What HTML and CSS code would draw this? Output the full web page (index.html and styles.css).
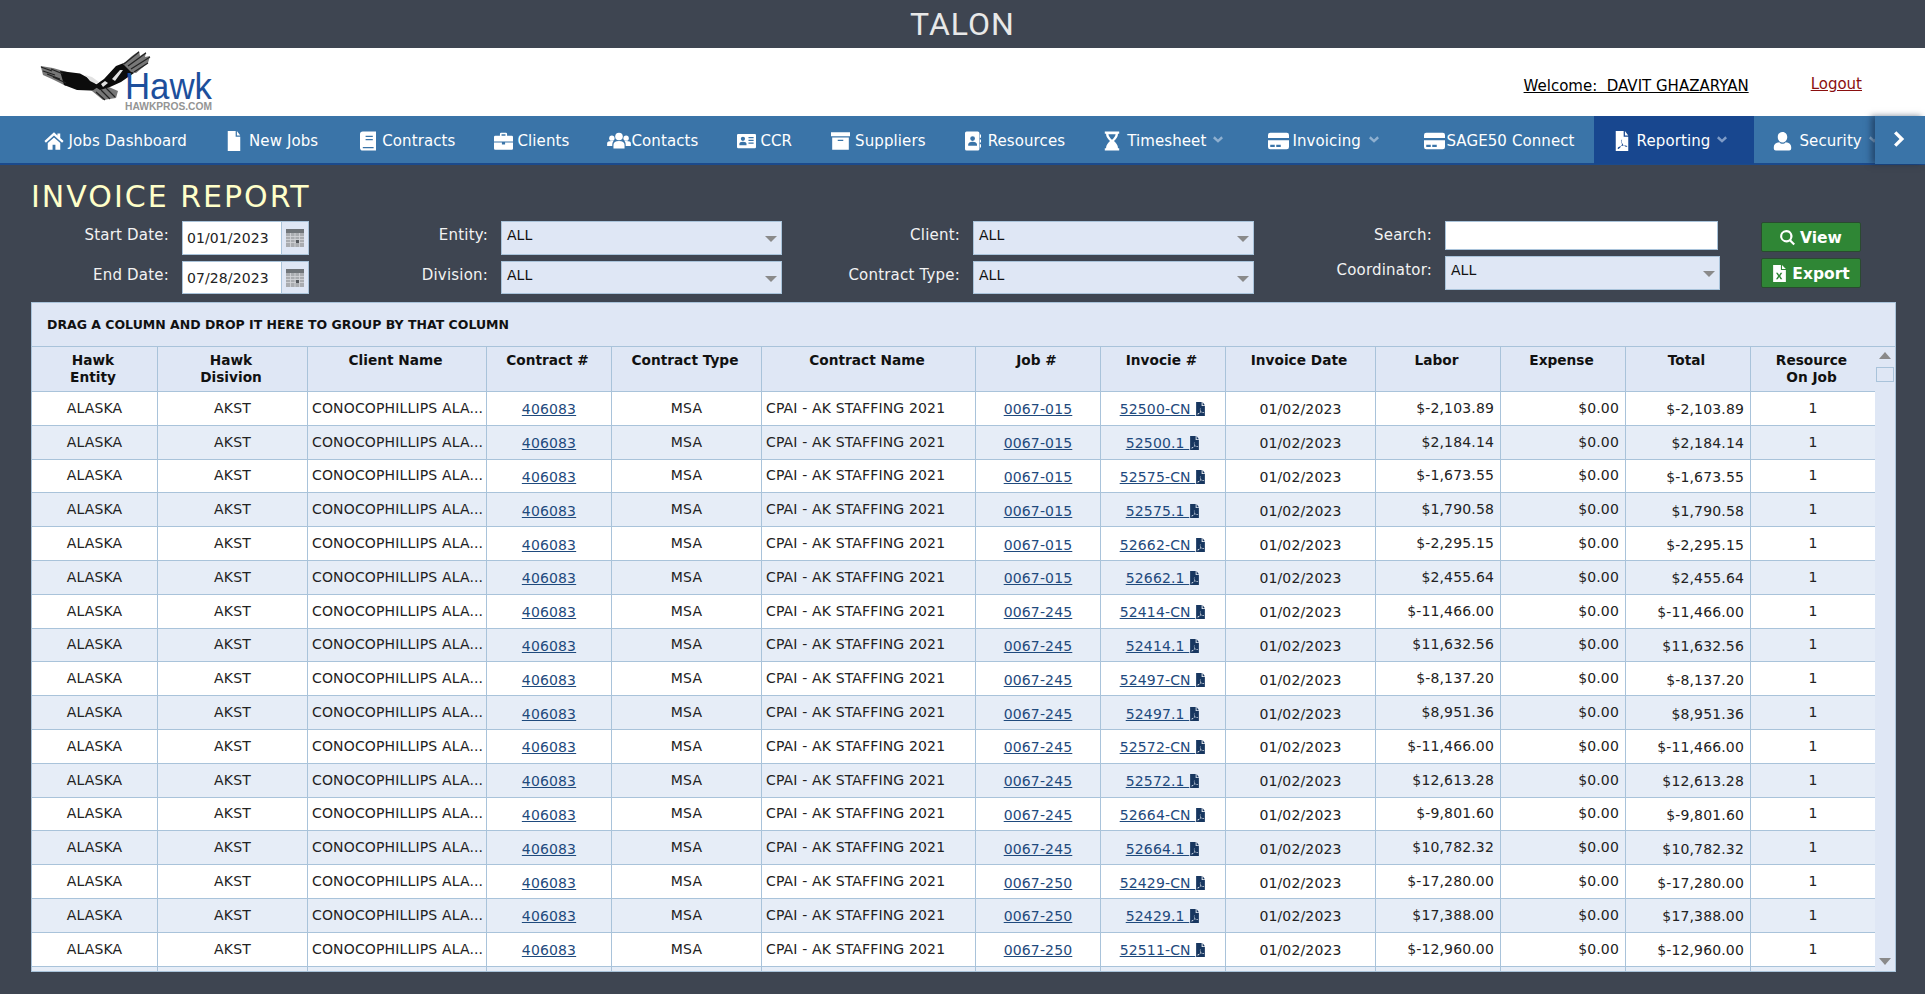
FILE: index.html
```html
<!DOCTYPE html>
<html lang="en">
<head>
<meta charset="utf-8">
<title>Talon - Invoice Report</title>
<link rel="stylesheet" href="styles.css">
</head>
<body>
<svg class="sprite" xmlns="http://www.w3.org/2000/svg">
<symbol id="i-home" viewBox="0 0 24 21"><path fill-rule="evenodd" d="M12 0 0.500 10.500l1.800 2L12 3.900l9.700 8.600 1.800-2-4-3.600V1.500h-3.400v2.400zM4.500 12.900V21h5.800v-6h3.400v6h5.800v-8.100L12 6.400z"/></symbol>
<symbol id="i-file" viewBox="0 0 17 24"><path d="M1 0h9.500v7H16v17H1zM12 0l4 5.500h-4z"/></symbol>
<symbol id="i-book" viewBox="0 0 20 24"><path fill-rule="evenodd" d="M0 3.500A3.500 3.500 0 0 1 3.500 0H20v24H3.500A3.500 3.500 0 0 1 0 20.500zM7 5.500v1.600h9V5.500zM7 9.500v1.600h9V9.500zM3.500 19.500V21H17v-1.500z"/></symbol>
<symbol id="i-brief" viewBox="0 0 24 23"><path fill-rule="evenodd" d="M7.500 5V2.500A1.500 1.500 0 0 1 9 1h6a1.500 1.500 0 0 1 1.500 1.500V5H22.500A1.500 1.500 0 0 1 24 6.500V12H0V6.500A1.500 1.500 0 0 1 1.500 5zM9.500 3v2h5V3zM0 13.500h10V16h4v-2.500h10V21a1.500 1.500 0 0 1-1.500 1.500h-21A1.500 1.500 0 0 1 0 21z"/></symbol>
<symbol id="i-users" viewBox="0 0 30 24"><circle cx="15" cy="7" r="4.800"/><circle cx="6" cy="9" r="3.400"/><circle cx="24" cy="9" r="3.400"/><path d="M8 22v-4.500C8 14.500 10.500 12.500 15 12.500s7 2 7 5V22zM0 19v-3.500C0 13.500 2 12.500 6 12.500c1 0 1.500.1 2 .3C6.800 14 6.500 15.500 6.500 19zM30 19v-3.500c0-2-2-3-6-3-1 0-1.500.1-2 .3 1.200 1.200 1.500 2.700 1.500 6.200z"/></symbol>
<symbol id="i-card" viewBox="0 0 24 20"><path fill-rule="evenodd" d="M1.500 1h21A1.500 1.500 0 0 1 24 2.500v15a1.500 1.500 0 0 1-1.500 1.500h-21A1.500 1.500 0 0 1 0 17.500v-15A1.500 1.500 0 0 1 1.500 1zM7.500 4.500a2.700 2.700 0 1 0 0 5.400 2.700 2.700 0 0 0 0-5.400zM3 15.500h9v-2c0-1.700-1.500-2.700-4.500-2.700S3 11.800 3 13.500zM14.500 5v1.500H21V5zM14.500 8.500V10H21V8.500zM14.500 12v1.500H21V12z"/></symbol>
<symbol id="i-archive" viewBox="0 0 24 24"><path fill-rule="evenodd" d="M0 1h24v5H0zM1.500 7.500h21V23h-21zM8.500 10.500V12h7v-1.500z"/></symbol>
<symbol id="i-abook" viewBox="0 0 20 24"><path fill-rule="evenodd" d="M2 0h14a2 2 0 0 1 2 2v20a2 2 0 0 1-2 2H2a2 2 0 0 1-2-2V2a2 2 0 0 1 2-2zM9.500 6a3 3 0 1 0 0 6 3 3 0 0 0 0-6zM4 18h11v-1.500c0-2-2-3.500-5.500-3.500S4 14.500 4 16.500z"/><path d="M18.500 4H20v4h-1.500zM18.500 10H20v4h-1.500zM18.500 16H20v4h-1.500z"/></symbol>
<symbol id="i-hour" viewBox="0 0 20 24"><path fill-rule="evenodd" d="M1 0h18v3h-1.500c0 4-2.500 6.500-5 9 2.500 2.500 5 5 5 9H19v3H1v-3h1.500c0-4 2.500-6.500 5-9-2.500-2.500-5-5-5-9H1zM5.500 3.500c.5 3 2.500 5 4.500 7 2-2 4-4 4.500-7z"/></symbol>
<symbol id="i-credit" viewBox="0 0 28 24"><path fill-rule="evenodd" d="M3 1h22a3 3 0 0 1 3 3v4H0V4a3 3 0 0 1 3-3zM0 11h28v9a3 3 0 0 1-3 3H3a3 3 0 0 1-3-3zM3 17v3h6v-3zM11 17v3h6v-3z"/></symbol>
<symbol id="i-pdf" viewBox="0 0 17 24"><path fill-rule="evenodd" d="M1 0h9.500v7H16v17H1zM8 10.500c-1 .5-.5 3 .6 5.500-1 2.500-2.800 5-4.300 5.500-.8.300-1.300-.6-.8-1.300 1-1.200 3.200-2 7-2.700 2-.3 4 0 4.300.8.200.8-1 1-2.300.4-1.800-.9-3.300-2.700-4.200-4.800-.5-1.800-.3-3.200.7-3.400z"/><path d="M12 0l4 5.500h-4z"/></symbol>
<symbol id="i-user" viewBox="0 0 24 24"><path d="M12 0.500c3.800 0 6 3 6 6.500s-2.200 7-6 7-6-3.500-6-7 2.200-6.500 6-6.500zM8 13.500c1 1.500 2.500 2 4 2s3-.5 4-2c4.500.5 7 2.500 7 6v2A2.500 2.500 0 0 1 20.500 24h-17A2.500 2.500 0 0 1 1 21.500v-2c0-3.500 2.500-5.500 7-6z"/></symbol>
<symbol id="i-down" viewBox="0 0 12 8"><path d="M2 0 6 4 10 0 12 2.500 6 8 0 2.500z"/></symbol>
<symbol id="i-right" viewBox="0 0 14 20"><path d="M3 0 13 10 3 20 0 17l7-7-7-7z"/></symbol>
<symbol id="i-search" viewBox="0 0 24 24"><path fill-rule="evenodd" d="M10 0a10 10 0 0 1 8 16l6 6-2.500 2.500-6-6A10 10 0 1 1 10 0zM10 3.500a6.500 6.500 0 1 0 0 13 6.500 6.500 0 0 0 0-13z"/></symbol>
<symbol id="i-xls" viewBox="0 0 20 24"><path fill-rule="evenodd" d="M1 0h11v7h7v17H1zM5 11l3 4.500L5 20h2.500l2-3 2 3H14l-3-4.500L14 11h-2.500l-2 3-2-3z"/><path d="M13.500 0 19 5.500h-5.500z"/></symbol>
<symbol id="i-cal" viewBox="0 0 18 18"><path d="M0 0h18v4H0z" fill="#6f7479"/><path d="M0 4h18v14H0z" fill="#a9acb0"/><path d="M0 7.500h18M0 10.500h18M0 13.500h18M4.500 4v14M9 4v14M13.500 4v14" stroke="#d5d7da" stroke-width=".8"/><path d="M10 11h3v3h-3z" fill="#55595e"/></symbol>
</svg>

<header class="topbar"><span class="brand">TALON</span></header>

<div class="masthead">
  <svg class="logo" viewBox="0 0 190 68" xmlns="http://www.w3.org/2000/svg" aria-label="Hawk">
    <g class="eagle">
      <path class="grey" d="M4.700 18 17 20 31 24 30 38 17 31.500 7 27z"/>
      <path d="M24 23 44 25.500 56 32 62 38 60 43 54 42.500 41 42 28 37z"/>
      <path class="grey" d="M56 43 66 36 82 43 80 50 67 52z"/>
      <path d="M68 31 80 18 93 13 98 25 85 34 74 39 64 42 58 38z"/>
      <path class="grey" d="M87 16 96 8 103 3 104 8 110 4 109 9 114 8 112 15 100 25 95 24z"/>
      <path class="feather" d="M5 19 16 23M7 23 19 27M11 26 24 31M17 29 30 35M15 21 27 26M88 16 103 4M92 18 110 5M95 21 114 9M98 24 112 15M60 44 69 52M65 42 74 51M70 40 79 49"/>
      <path class="white" d="M49 27 56 29 63 34 60 36 54 33zM65 36 69 33 72 35 67 39zM76 31 84 22 87 22 79 33z"/>
    </g>
    <text class="logo-word" x="89" y="51" textLength="87" lengthAdjust="spacingAndGlyphs">Hawk</text>
    <text class="logo-site" x="89" y="61.500" textLength="87" lengthAdjust="spacingAndGlyphs">HAWKPROS.COM</text>
  </svg>
  <div class="account">
    <a class="welcome" href="#">Welcome:&nbsp; DAVIT GHAZARYAN</a>
    <a class="logout" href="#">Logout</a>
  </div>
</div>

<div class="navwrap">
<nav class="nav">
  <a href="#" class="item g5"><svg class="ic i-home"><use href="#i-home"/></svg><span>Jobs Dashboard</span></a>
  <a href="#" class="item after3"><svg class="ic i-file"><use href="#i-file"/></svg><span>New Jobs</span></a>
  <a href="#" class="item g6"><svg class="ic i-file"><use href="#i-book"/></svg><span>Contracts</span></a>
  <a href="#" class="item g4"><svg class="ic i-wide"><use href="#i-brief"/></svg><span>Clients</span></a>
  <a href="#" class="item g0"><svg class="ic i-users"><use href="#i-users"/></svg><span>Contacts</span></a>
  <a href="#" class="item g4x"><svg class="ic i-wide"><use href="#i-card"/></svg><span>CCR</span></a>
  <a href="#" class="item g5"><svg class="ic i-wide"><use href="#i-archive"/></svg><span>Suppliers</span></a>
  <a href="#" class="item"><svg class="ic i-file"><use href="#i-abook"/></svg><span>Resources</span></a>
  <a href="#" class="item caret"><svg class="ic i-file"><use href="#i-hour"/></svg><span>Timesheet</span><svg class="chev"><use href="#i-down"/></svg></a>
  <a href="#" class="item caret g3x"><svg class="ic i-credit"><use href="#i-credit"/></svg><span>Invoicing</span><svg class="chev"><use href="#i-down"/></svg></a>
  <a href="#" class="item g1x"><svg class="ic i-credit"><use href="#i-credit"/></svg><span>SAGE50 Connect</span></a>
  <a href="#" class="item caret active"><svg class="ic i-file"><use href="#i-pdf"/></svg><span>Reporting</span><svg class="chev"><use href="#i-down"/></svg></a>
  <a href="#" class="item caret"><svg class="ic i-wide"><use href="#i-user"/></svg><span>Security</span><svg class="chev"><use href="#i-down"/></svg></a>
</nav>
<button class="navnext" aria-label="Next"><svg class="next"><use href="#i-right"/></svg></button>
</div>

<main class="content">
  <h1 class="title">INVOICE REPORT</h1>
  <section class="filters">
    <div class="fgroup g1">
      <label>Start Date:</label><div class="date tall"><span>01/01/2023</span><i><svg><use href="#i-cal"/></svg></i></div>
      <label>End Date:</label><div class="date"><span>07/28/2023</span><i><svg><use href="#i-cal"/></svg></i></div>
    </div>
    <div class="fgroup g2">
      <label>Entity:</label><div class="select tall"><span>ALL</span><b></b></div>
      <label>Division:</label><div class="select"><span>ALL</span><b></b></div>
    </div>
    <div class="fgroup g3">
      <label>Client:</label><div class="select tall"><span>ALL</span><b></b></div>
      <label>Contract Type:</label><div class="select"><span>ALL</span><b></b></div>
    </div>
    <div class="fgroup g4c">
      <label>Search:</label><div class="search"></div>
      <label>Coordinator:</label><div class="select tall"><span>ALL</span><b></b></div>
    </div>
    <div class="actions">
      <button class="btn"><svg><use href="#i-search"/></svg>View</button>
      <button class="btn"><svg><use href="#i-xls"/></svg>Export</button>
    </div>
  </section>

  <section class="grid">
    <div class="groupbar">DRAG A COLUMN AND DROP IT HERE TO GROUP BY THAT COLUMN</div>
    <div class="gridbody">
      <table class="report">
        <colgroup><col class="c126"><col class="c150"><col class="c179"><col class="c125"><col class="c150"><col class="c214"><col class="c125"><col class="c125"><col class="c150"><col class="c125"><col class="c125"><col class="c125"><col class="c124"></colgroup>
        <thead><tr><th>Hawk<br>Entity</th><th>Hawk<br>Disivion</th><th>Client Name</th><th>Contract #</th><th>Contract Type</th><th>Contract Name</th><th>Job #</th><th>Invocie #</th><th>Invoice Date</th><th>Labor</th><th>Expense</th><th>Total</th><th>Resource<br>On Job</th></tr></thead>
        <tbody>
<tr><td>ALASKA</td><td>AKST</td><td class="l">CONOCOPHILLIPS ALA...</td><td class="k"><a href="#">406083</a></td><td>MSA</td><td class="l">CPAI - AK STAFFING 2021</td><td class="k"><a href="#">0067-015</a></td><td class="k"><a href="#">52500-CN </a><svg class="pdf"><use href="#i-pdf"/></svg></td><td class="k">01/02/2023</td><td class="r">$-2,103.89</td><td class="r">$0.00</td><td class="r k">$-2,103.89</td><td>1</td></tr>
<tr><td>ALASKA</td><td>AKST</td><td class="l">CONOCOPHILLIPS ALA...</td><td class="k"><a href="#">406083</a></td><td>MSA</td><td class="l">CPAI - AK STAFFING 2021</td><td class="k"><a href="#">0067-015</a></td><td class="k"><a href="#">52500.1 </a><svg class="pdf"><use href="#i-pdf"/></svg></td><td class="k">01/02/2023</td><td class="r">$2,184.14</td><td class="r">$0.00</td><td class="r k">$2,184.14</td><td>1</td></tr>
<tr><td>ALASKA</td><td>AKST</td><td class="l">CONOCOPHILLIPS ALA...</td><td class="k"><a href="#">406083</a></td><td>MSA</td><td class="l">CPAI - AK STAFFING 2021</td><td class="k"><a href="#">0067-015</a></td><td class="k"><a href="#">52575-CN </a><svg class="pdf"><use href="#i-pdf"/></svg></td><td class="k">01/02/2023</td><td class="r">$-1,673.55</td><td class="r">$0.00</td><td class="r k">$-1,673.55</td><td>1</td></tr>
<tr><td>ALASKA</td><td>AKST</td><td class="l">CONOCOPHILLIPS ALA...</td><td class="k"><a href="#">406083</a></td><td>MSA</td><td class="l">CPAI - AK STAFFING 2021</td><td class="k"><a href="#">0067-015</a></td><td class="k"><a href="#">52575.1 </a><svg class="pdf"><use href="#i-pdf"/></svg></td><td class="k">01/02/2023</td><td class="r">$1,790.58</td><td class="r">$0.00</td><td class="r k">$1,790.58</td><td>1</td></tr>
<tr><td>ALASKA</td><td>AKST</td><td class="l">CONOCOPHILLIPS ALA...</td><td class="k"><a href="#">406083</a></td><td>MSA</td><td class="l">CPAI - AK STAFFING 2021</td><td class="k"><a href="#">0067-015</a></td><td class="k"><a href="#">52662-CN </a><svg class="pdf"><use href="#i-pdf"/></svg></td><td class="k">01/02/2023</td><td class="r">$-2,295.15</td><td class="r">$0.00</td><td class="r k">$-2,295.15</td><td>1</td></tr>
<tr><td>ALASKA</td><td>AKST</td><td class="l">CONOCOPHILLIPS ALA...</td><td class="k"><a href="#">406083</a></td><td>MSA</td><td class="l">CPAI - AK STAFFING 2021</td><td class="k"><a href="#">0067-015</a></td><td class="k"><a href="#">52662.1 </a><svg class="pdf"><use href="#i-pdf"/></svg></td><td class="k">01/02/2023</td><td class="r">$2,455.64</td><td class="r">$0.00</td><td class="r k">$2,455.64</td><td>1</td></tr>
<tr><td>ALASKA</td><td>AKST</td><td class="l">CONOCOPHILLIPS ALA...</td><td class="k"><a href="#">406083</a></td><td>MSA</td><td class="l">CPAI - AK STAFFING 2021</td><td class="k"><a href="#">0067-245</a></td><td class="k"><a href="#">52414-CN </a><svg class="pdf"><use href="#i-pdf"/></svg></td><td class="k">01/02/2023</td><td class="r">$-11,466.00</td><td class="r">$0.00</td><td class="r k">$-11,466.00</td><td>1</td></tr>
<tr><td>ALASKA</td><td>AKST</td><td class="l">CONOCOPHILLIPS ALA...</td><td class="k"><a href="#">406083</a></td><td>MSA</td><td class="l">CPAI - AK STAFFING 2021</td><td class="k"><a href="#">0067-245</a></td><td class="k"><a href="#">52414.1 </a><svg class="pdf"><use href="#i-pdf"/></svg></td><td class="k">01/02/2023</td><td class="r">$11,632.56</td><td class="r">$0.00</td><td class="r k">$11,632.56</td><td>1</td></tr>
<tr><td>ALASKA</td><td>AKST</td><td class="l">CONOCOPHILLIPS ALA...</td><td class="k"><a href="#">406083</a></td><td>MSA</td><td class="l">CPAI - AK STAFFING 2021</td><td class="k"><a href="#">0067-245</a></td><td class="k"><a href="#">52497-CN </a><svg class="pdf"><use href="#i-pdf"/></svg></td><td class="k">01/02/2023</td><td class="r">$-8,137.20</td><td class="r">$0.00</td><td class="r k">$-8,137.20</td><td>1</td></tr>
<tr><td>ALASKA</td><td>AKST</td><td class="l">CONOCOPHILLIPS ALA...</td><td class="k"><a href="#">406083</a></td><td>MSA</td><td class="l">CPAI - AK STAFFING 2021</td><td class="k"><a href="#">0067-245</a></td><td class="k"><a href="#">52497.1 </a><svg class="pdf"><use href="#i-pdf"/></svg></td><td class="k">01/02/2023</td><td class="r">$8,951.36</td><td class="r">$0.00</td><td class="r k">$8,951.36</td><td>1</td></tr>
<tr><td>ALASKA</td><td>AKST</td><td class="l">CONOCOPHILLIPS ALA...</td><td class="k"><a href="#">406083</a></td><td>MSA</td><td class="l">CPAI - AK STAFFING 2021</td><td class="k"><a href="#">0067-245</a></td><td class="k"><a href="#">52572-CN </a><svg class="pdf"><use href="#i-pdf"/></svg></td><td class="k">01/02/2023</td><td class="r">$-11,466.00</td><td class="r">$0.00</td><td class="r k">$-11,466.00</td><td>1</td></tr>
<tr><td>ALASKA</td><td>AKST</td><td class="l">CONOCOPHILLIPS ALA...</td><td class="k"><a href="#">406083</a></td><td>MSA</td><td class="l">CPAI - AK STAFFING 2021</td><td class="k"><a href="#">0067-245</a></td><td class="k"><a href="#">52572.1 </a><svg class="pdf"><use href="#i-pdf"/></svg></td><td class="k">01/02/2023</td><td class="r">$12,613.28</td><td class="r">$0.00</td><td class="r k">$12,613.28</td><td>1</td></tr>
<tr><td>ALASKA</td><td>AKST</td><td class="l">CONOCOPHILLIPS ALA...</td><td class="k"><a href="#">406083</a></td><td>MSA</td><td class="l">CPAI - AK STAFFING 2021</td><td class="k"><a href="#">0067-245</a></td><td class="k"><a href="#">52664-CN </a><svg class="pdf"><use href="#i-pdf"/></svg></td><td class="k">01/02/2023</td><td class="r">$-9,801.60</td><td class="r">$0.00</td><td class="r k">$-9,801.60</td><td>1</td></tr>
<tr><td>ALASKA</td><td>AKST</td><td class="l">CONOCOPHILLIPS ALA...</td><td class="k"><a href="#">406083</a></td><td>MSA</td><td class="l">CPAI - AK STAFFING 2021</td><td class="k"><a href="#">0067-245</a></td><td class="k"><a href="#">52664.1 </a><svg class="pdf"><use href="#i-pdf"/></svg></td><td class="k">01/02/2023</td><td class="r">$10,782.32</td><td class="r">$0.00</td><td class="r k">$10,782.32</td><td>1</td></tr>
<tr><td>ALASKA</td><td>AKST</td><td class="l">CONOCOPHILLIPS ALA...</td><td class="k"><a href="#">406083</a></td><td>MSA</td><td class="l">CPAI - AK STAFFING 2021</td><td class="k"><a href="#">0067-250</a></td><td class="k"><a href="#">52429-CN </a><svg class="pdf"><use href="#i-pdf"/></svg></td><td class="k">01/02/2023</td><td class="r">$-17,280.00</td><td class="r">$0.00</td><td class="r k">$-17,280.00</td><td>1</td></tr>
<tr><td>ALASKA</td><td>AKST</td><td class="l">CONOCOPHILLIPS ALA...</td><td class="k"><a href="#">406083</a></td><td>MSA</td><td class="l">CPAI - AK STAFFING 2021</td><td class="k"><a href="#">0067-250</a></td><td class="k"><a href="#">52429.1 </a><svg class="pdf"><use href="#i-pdf"/></svg></td><td class="k">01/02/2023</td><td class="r">$17,388.00</td><td class="r">$0.00</td><td class="r k">$17,388.00</td><td>1</td></tr>
<tr><td>ALASKA</td><td>AKST</td><td class="l">CONOCOPHILLIPS ALA...</td><td class="k"><a href="#">406083</a></td><td>MSA</td><td class="l">CPAI - AK STAFFING 2021</td><td class="k"><a href="#">0067-250</a></td><td class="k"><a href="#">52511-CN </a><svg class="pdf"><use href="#i-pdf"/></svg></td><td class="k">01/02/2023</td><td class="r">$-12,960.00</td><td class="r">$0.00</td><td class="r k">$-12,960.00</td><td>1</td></tr>
<tr><td></td><td></td><td></td><td></td><td></td><td></td><td></td><td></td><td></td><td></td><td></td><td></td><td></td></tr>
        </tbody>
      </table>
      <div class="vscroll"><b class="up"></b><span class="thumb"></span><b class="dn"></b></div>
    </div>
  </section>
</main>
</body>
</html>
```

FILE: styles.css
```css
* { box-sizing: border-box; }
html, body { margin: 0; height: 994px; overflow: hidden; }
body { background: #3e4551; color: #222; font-family: "DejaVu Sans", Tahoma, sans-serif; font-size: 14px; }
.sprite { display: none; }

.topbar { height: 48px; display: flex; align-items: center; justify-content: center; background: #3e4551; }
.brand { font-family: Roboto, sans-serif; font-size: 32px; font-weight: 400; letter-spacing: 1px; color: #e8e8e8; }

.masthead { height: 68px; background: #fff; display: flex; justify-content: space-between; }
.logo { width: 190px; height: 68px; margin-left: 36px; }
.eagle { filter: blur(.35px); }
.eagle path { fill: #0c0c0c; }
.eagle .grey { fill: #777; }
.eagle .feather { fill: none; stroke: #222; stroke-width: 1.200; }
.eagle .white { fill: #e2e2e2; }
.logo-word { font-family: "Liberation Sans", sans-serif; font-size: 37px; fill: #1d4f9c; }
.logo-site { font-family: "Liberation Sans", sans-serif; font-size: 10px; font-weight: 700; fill: #949494; }
.account { display: flex; gap: 62px; margin-right: 63px; padding-top: 28px; font-size: 15px; line-height: 18px; }
.welcome { color: #000; position: relative; top: 1px; }
.logout { color: #8a0f0f; top: -1px; position: relative; }

.navwrap { position: relative; height: 49px; background: #3a74a8; border-bottom: 2px solid #1b4a8c; }
.nav { display: flex; height: 48px; padding-left: 24px; overflow: hidden; }
.item { display: flex; align-items: center; flex: none; gap: 7px; padding: 1px 19.500px 0; color: #fff; text-decoration: none; font-size: 15px; letter-spacing: .1px; white-space: nowrap; }
.item.after3 { margin-right: 3px; }
.item.g6 { gap: 6px; }
.item.g5 { gap: 5px; }
.item.g4 { gap: 4px; margin-right: -1px; }
.item.g4x { gap: 4px; }
.item.g3x { gap: 3.500px; margin-right: .5px; }
.item.g3x .chev { margin-left: 5px; }
.item.g1x { gap: 1px; }
.item.g0 { gap: 0; }
.item.caret { padding-right: 25px; }
.item.active { background: #18478f; padding-right: 26.500px; }
.ic { height: 20px; fill: #fff; flex: none; }
.i-home { width: 20px; height: 18px; }
.i-file { width: 16px; }
.i-wide { width: 19px; }
.i-users { width: 24px; height: 19px; }
.i-credit { width: 21px; }
.chev { width: 10px; height: 7px; fill: #8fb0d0; margin-bottom: 3px; }
.active .chev { fill: #7f9cc7; }
.navnext { position: absolute; top: 0; right: 0; width: 50px; height: 48px; padding: 0; border: 0; background: #3a74a8; box-shadow: -4px 0 6px rgba(20, 40, 70, .55); display: flex; align-items: center; justify-content: center; }
.next { width: 11px; height: 16px; fill: #fff; margin-right: 2px; margin-bottom: 2px; }

.content { padding: 0 29px 0 31px; }
.title { margin: 0; height: 56px; padding-top: 14px; font-size: 30px; line-height: 36px; font-weight: 400; letter-spacing: 2px; color: #ffffc9; }

.filters { display: flex; height: 81px; color: #f2f2f2; }
.fgroup { display: grid; row-gap: 6px; align-content: start; }
.g1 { grid-template-columns: 151px 127px; }
.g2 { grid-template-columns: 192px 281px; }
.g3 { grid-template-columns: 191px 281px; }
.g4c { grid-template-columns: 191px 275px; }
.fgroup label { text-align: right; padding-right: 13px; font-size: 15px; letter-spacing: .2px; line-height: 18px; padding-top: 5px; }
.date, .select, .search { border: 1px solid #a9c3da; height: 33px; color: #222; }
.tall { height: 34px; }
.search { height: 29px; width: 273px; background: #fff; }
.date { display: flex; background: #fff; font-size: 14px; }
.date span { flex: 1; padding: 7px 0 0 4px; line-height: 18px; letter-spacing: .1px; }
.date i { width: 27px; background: #dfe7f5; border-left: 1px solid #a9c3da; display: flex; align-items: center; justify-content: center; }
.date svg { width: 18px; height: 18px; }
.select { position: relative; background: #dfe7f5; font-size: 14px; line-height: 16px; padding: 5px 0 0 5px; color: #111; }
.select b { position: absolute; right: 4px; top: 14px; border: 6.500px solid transparent; border-top: 6px solid #8a8a8a; border-bottom: 0; }
.actions { display: flex; flex-direction: column; gap: 6px; margin-left: 41px; padding-top: 1px; }
.btn { width: 100px; height: 30px; display: flex; align-items: center; justify-content: center; gap: 5px; border: 1px solid #2a4a30; border-radius: 2px; background: #2f8635; color: #fff; font: inherit; font-size: 15.500px; font-weight: 700; padding: 1px 0 0; }
.btn svg { width: 15px; height: 17px; fill: #fff; }

.grid { width: 1865px; height: 670px; border: 1px solid #a9c3da; background: #dfe7f5; overflow: hidden; }
.groupbar { height: 44px; padding-top: 14px; font-size: 12.500px; line-height: 16px; font-weight: 700; color: #111; padding-left: 15px; border-bottom: 1px solid #a9c3da; }
.gridbody { display: flex; height: 624px; overflow: hidden; }
.report { width: 1843px; flex: none; table-layout: fixed; border-collapse: separate; border-spacing: 0; align-self: flex-start; }
.c126 { width: 126px; } .c150 { width: 150px; } .c179 { width: 179px; } .c125 { width: 125px; } .c214 { width: 214px; } .c124 { width: 124px; }
th { height: 45px; padding: 5px 6px 0 3px; vertical-align: top; font-size: 13.700px; line-height: 17px; font-weight: 700; color: #111; border-right: 1px solid #a9c3da; border-bottom: 1px solid #a9c3da; }
th:last-child, td:last-child { border-right: 0; }
td { height: 33.800px; padding: 0 5px 1px; text-align: center; font-size: 14px; letter-spacing: .15px; line-height: 16px; color: #222; background: #fff; border-right: 1px solid #a9c3da; border-bottom: 1px solid #a9c3da; white-space: nowrap; overflow: hidden; }
tr:nth-child(even) td { background: #e6edf7; }
td.l { text-align: left; padding-left: 4px; }
td.r { text-align: right; padding-right: 6px; }
td.k { padding-top: 2px; padding-bottom: 0; }
td a { color: #1f4a7d; }
.pdf { width: 11px; height: 14px; fill: #17365f; vertical-align: -2px; }
.vscroll { flex: 1; position: relative; }
.thumb { position: absolute; left: 1px; top: 20px; width: 18px; height: 15px; border: 1px solid #a9c3da; }
.up, .dn { position: absolute; left: 4px; border: 6px solid transparent; }
.up { top: 5px; border-bottom: 7px solid #8a8a8a; border-top: 0; }
.dn { bottom: 6px; border-top: 7px solid #8a8a8a; border-bottom: 0; }
```
